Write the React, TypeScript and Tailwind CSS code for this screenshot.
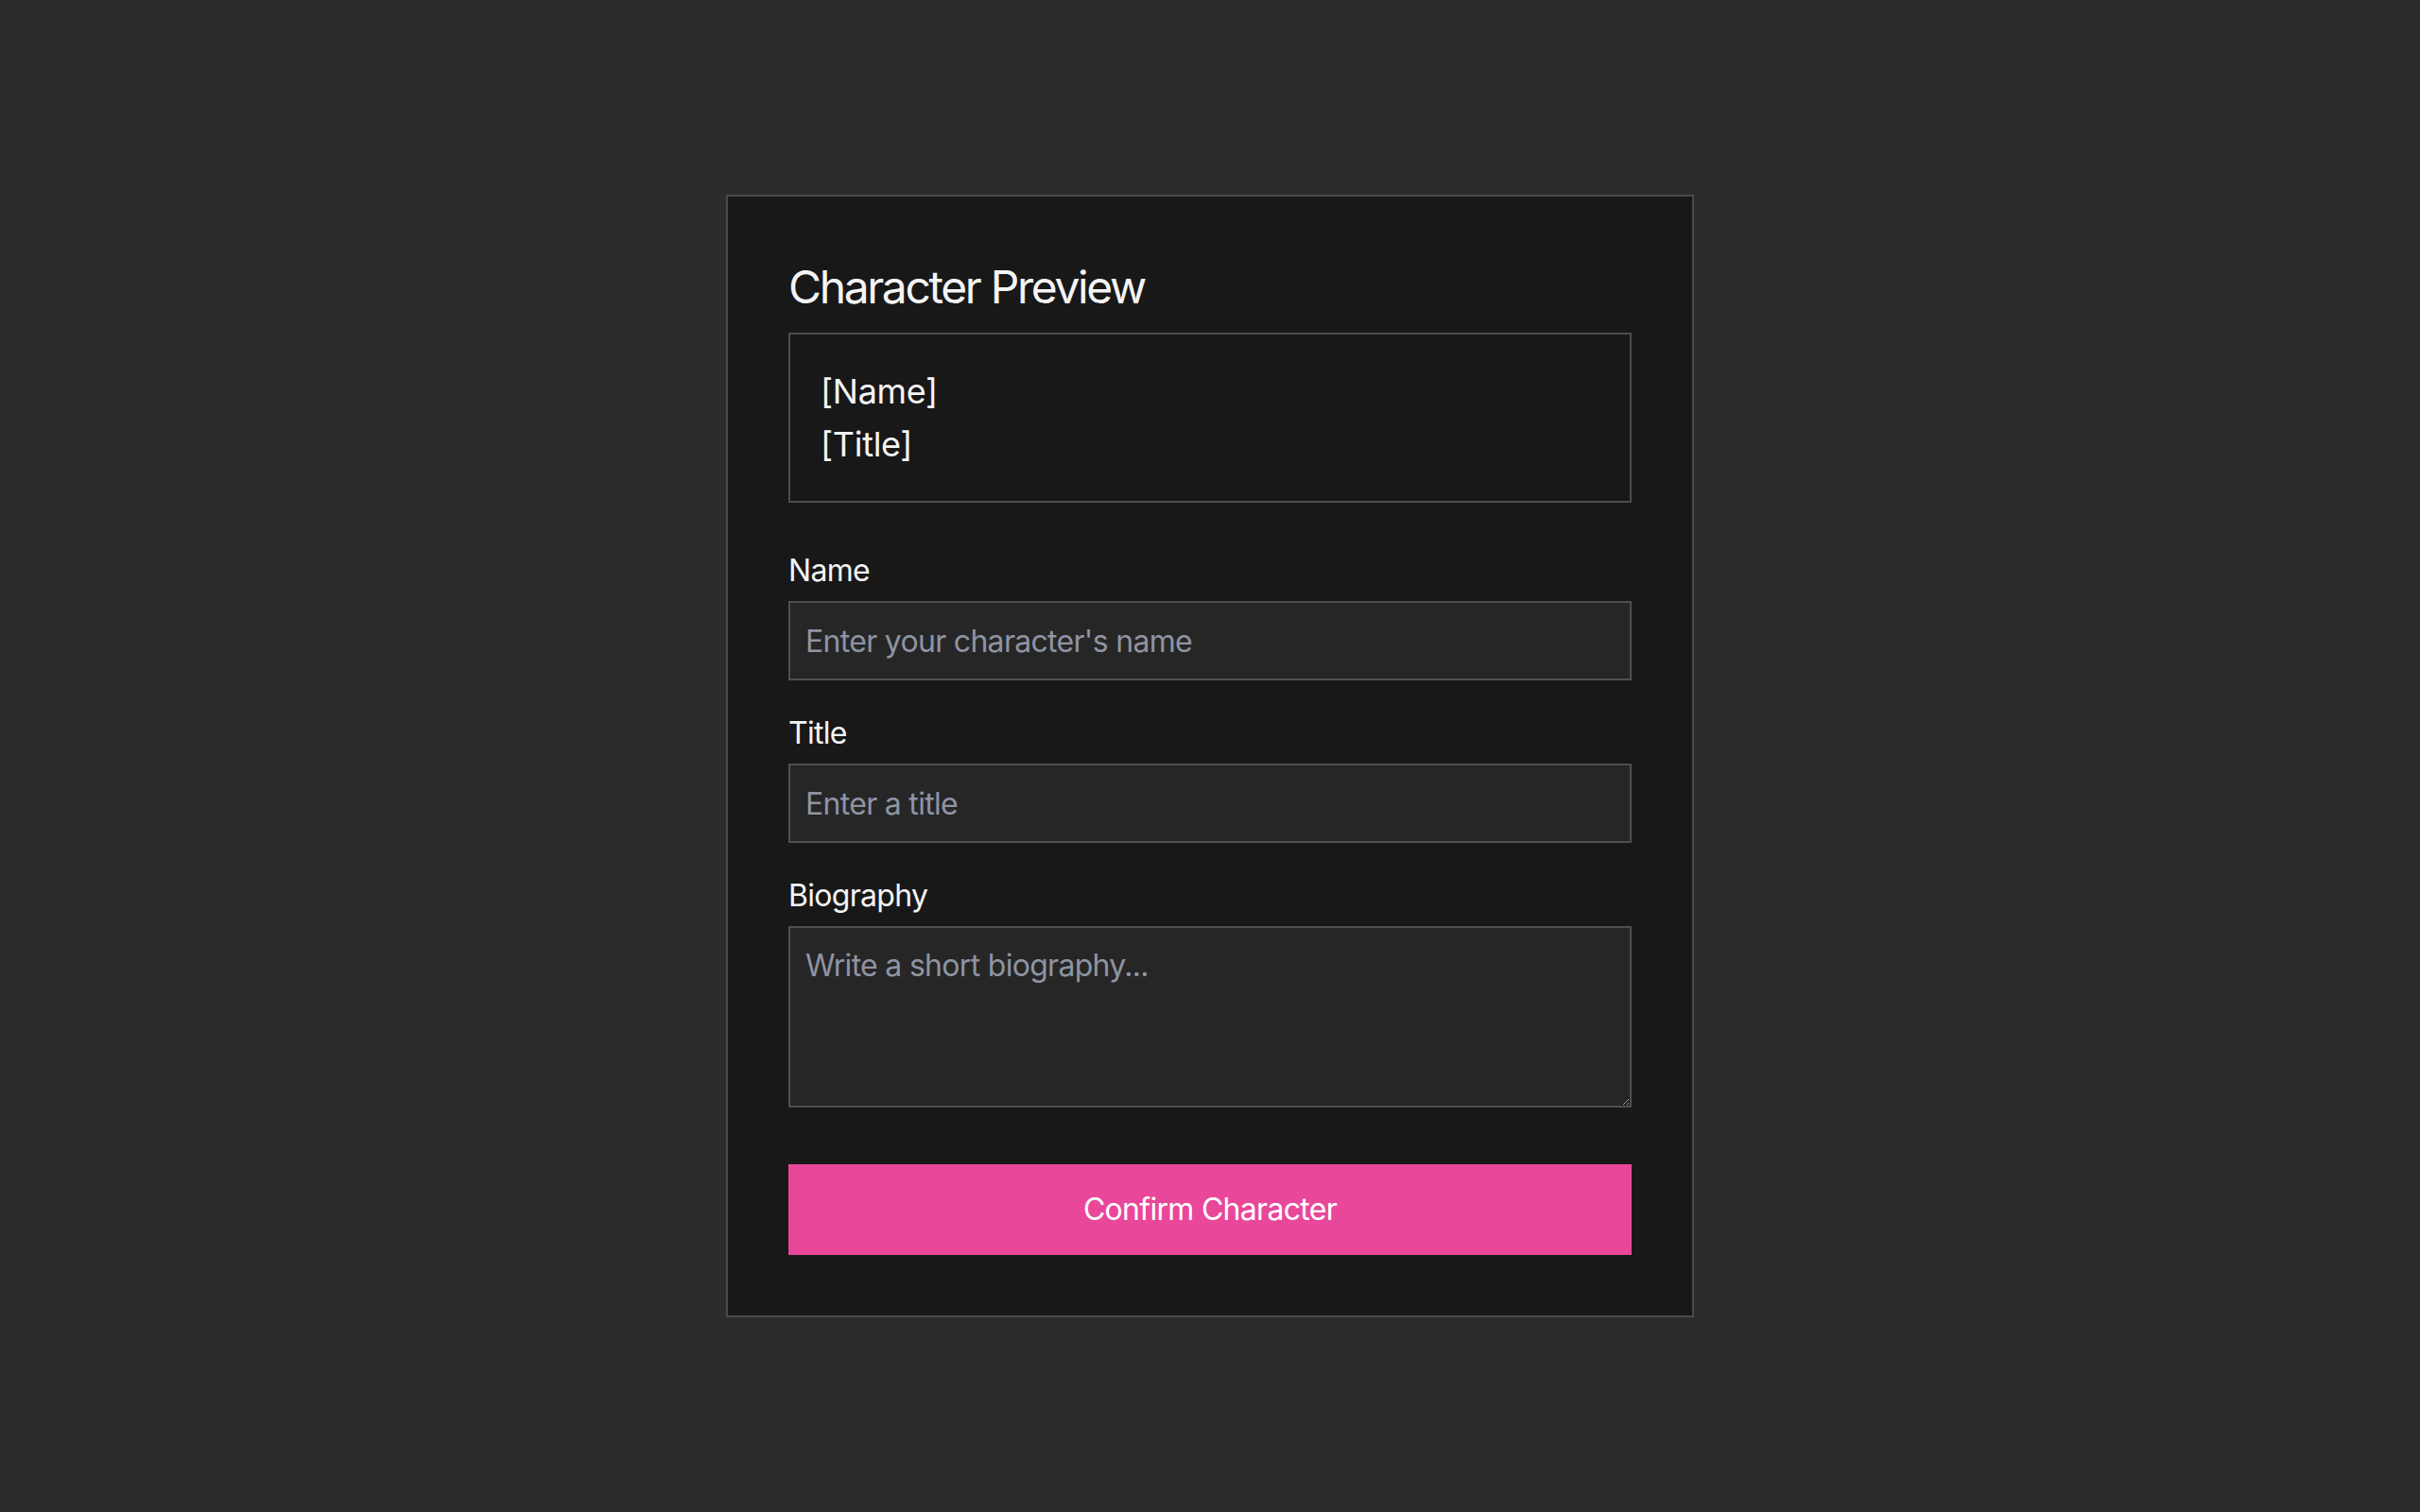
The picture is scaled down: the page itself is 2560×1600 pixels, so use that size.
export default function App() {
  return (
    <div
      className="min-h-screen flex items-center justify-center bg-[#2c2c2c]"
      style={{ fontFamily: 'Inter, "Noto Sans", sans-serif' }}
    >
      <div className="w-[1024px] bg-[#181818] border-2 border-[#4b4b4b] p-16">
        <h2 className="text-[48px] leading-[64px] tracking-[-2.4px] text-[#f4f4f4] mb-4">Character Preview</h2>
        <div className="border-2 border-[#4d4d4d] p-8 text-[36px] leading-[56px] tracking-[-0.3px] text-[#f4f4f4]">
          <div>[Name]</div>
          <div>[Title]</div>
        </div>

        <form className="mt-12" onSubmit={(e) => e.preventDefault()}>
          <label className="block text-[32px] leading-[48px] tracking-[-0.7px] text-[#f4f4f4] mb-2">Name</label>
          <input
            type="text"
            placeholder="Enter your character's name"
            className="block w-full h-[84px] px-4 py-4 text-[32px] leading-[48px] tracking-[-0.7px] bg-[#262626] border-2 border-[#4f4f4f] text-white placeholder:text-[#8e94a2] outline-none mb-8"
          />

          <label className="block text-[32px] leading-[48px] tracking-[-0.7px] text-[#f4f4f4] mb-2">Title</label>
          <input
            type="text"
            placeholder="Enter a title"
            className="block w-full h-[84px] px-4 py-4 text-[32px] leading-[48px] tracking-[-0.7px] bg-[#262626] border-2 border-[#4f4f4f] text-white placeholder:text-[#8e94a2] outline-none mb-8"
          />

          <label className="block text-[32px] leading-[48px] tracking-[-0.7px] text-[#f4f4f4] mb-2">Biography</label>
          <textarea
            placeholder="Write a short biography..."
            className="block w-full h-[192px] px-4 py-4 text-[32px] leading-[48px] tracking-[-0.7px] bg-[#262626] border-2 border-[#4f4f4f] text-white placeholder:text-[#8e94a2] outline-none"
          />

          <button
            type="submit"
            className="mt-[60px] block w-full h-24 bg-[#e9489a] text-[32px] leading-[48px] tracking-[-0.7px] text-white"
          >
            Confirm Character
          </button>
        </form>
      </div>
    </div>
  )
}
